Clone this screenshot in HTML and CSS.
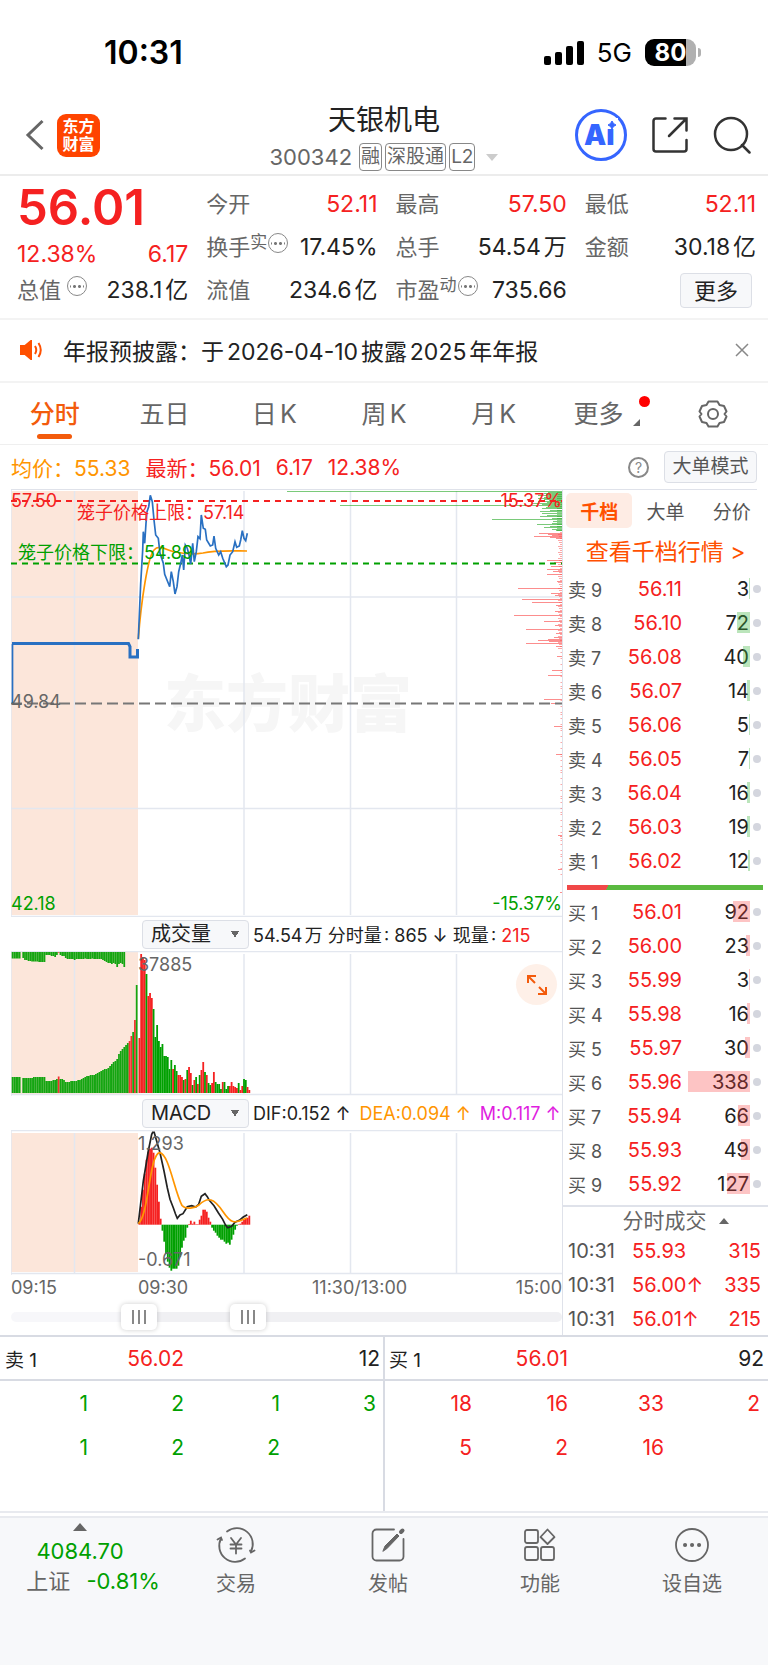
FILE: index.html
```html
<!DOCTYPE html>
<html lang="zh-CN">
<head>
    <meta charset="UTF-8">
    <meta name="viewport" content="width=device-width, initial-scale=1.0">
    <title>天银机电 300342</title>
    <!-- Stylesheet -->
    <link rel="stylesheet" href="styles.css">
</head>
<body>
    <div class="status">
        <span class="clock">10:31</span>
        <div class="status-right">
            <svg width="40" height="24" viewBox="0 0 40 24">
                <rect x="0" y="15" width="7" height="9" rx="2"/>
                <rect x="11" y="11" width="7" height="13" rx="2"/>
                <rect x="22" y="5" width="7" height="19" rx="2"/>
                <rect x="33" y="0" width="7" height="24" rx="2"/>
            </svg>
            <span class="network">5G</span>
            <div class="battery"><span>80</span></div>
        </div>
    </div>

    <header class="header">
        <div class="header-left">
            <a href="#" class="back" aria-label="返回">
                <svg width="20" height="32" viewBox="0 0 20 32" fill="none" stroke="#666" stroke-width="3">
                    <path d="M17.500 2 3 16l14.500 14"/>
                </svg>
            </a>
            <a href="#" class="logo">东方<br>财富</a>
        </div>
        <div class="title">
            <h1>天银机电</h1>
            <div class="subtitle">
                <span class="code">300342</span>
                <span class="badge">融</span>
                <span class="badge">深股通</span>
                <span class="badge">L2</span>
                <svg class="drop" width="12" height="7" viewBox="0 0 12 7" fill="#ccc"><path d="M0 0h12L6 7z"/></svg>
            </div>
        </div>
        <div class="header-right">
            <button aria-label="智能助手">
                <svg width="52" height="52" viewBox="0 0 52 52">
                    <circle cx="26" cy="26" r="24.500" fill="#fff" stroke="#3565ff" stroke-width="3"/>
                    <text x="9" y="36" class="ai">Ai</text>
                    <rect x="30" y="9" width="13" height="11" fill="#fff"/>
                    <path d="M37 12q1 3 4 4-3 1-4 4-1-3-4-4 3-1 4-4z" fill="#3565ff" stroke="#3565ff"/>
                </svg>
            </button>
            <button aria-label="分享">
                <svg width="36" height="36" viewBox="0 0 36 36" fill="none" stroke="#333" stroke-width="2.500" stroke-linecap="round">
                    <path d="M13.500 1.500H4A2.500 2.500 0 0 0 1.500 4v28A2.500 2.500 0 0 0 4 34.500h28a2.500 2.500 0 0 0 2.500-2.500v-9"/>
                    <path d="M22.500 1.500h12v12M34 2 17 19"/>
                </svg>
            </button>
            <button aria-label="搜索">
                <svg width="38" height="38" viewBox="0 0 38 38" fill="none" stroke="#333" stroke-width="2.500" stroke-linecap="round">
                    <circle cx="18" cy="18" r="16"/>
                    <path d="M29 29l7.500 7.500"/>
                </svg>
            </button>
        </div>
    </header>

    <section class="quote">
        <div class="quote-col">
            <div class="price">56.01</div>
            <div class="change"><span>12.38%</span><span>6.17</span></div>
            <div class="item"><span class="name">总值<i class="dots"></i></span><span>238.1亿</span></div>
        </div>
        <div class="quote-col">
            <div class="item"><span class="name">今开</span><span class="red">52.11</span></div>
            <div class="item"><span class="name">换手<sup>实</sup><i class="dots"></i></span><span>17.45%</span></div>
            <div class="item"><span class="name">流值</span><span>234.6亿</span></div>
        </div>
        <div class="quote-col">
            <div class="item"><span class="name">最高</span><span class="red">57.50</span></div>
            <div class="item"><span class="name">总手</span><span>54.54万</span></div>
            <div class="item"><span class="name">市盈<sup>动</sup><i class="dots"></i></span><span>735.66</span></div>
        </div>
        <div class="quote-col">
            <div class="item"><span class="name">最低</span><span class="red">52.11</span></div>
            <div class="item"><span class="name">金额</span><span>30.18亿</span></div>
            <div class="item item-more"><button class="btn">更多</button></div>
        </div>
    </section>

    <section class="notice">
        <svg width="24" height="20" viewBox="0 0 24 20" fill="none" stroke="#ff5000" stroke-width="2">
            <path d="M2 6h4l6-5v18l-6-5H2z" fill="#ff5000"/>
            <path d="M16 6q2.500 4 0 8M19.500 3q4.500 7 0 14"/>
        </svg>
        <p>年报预披露：于2026-04-10披露2025年年报</p>
        <button aria-label="关闭">
            <svg width="14" height="14" viewBox="0 0 14 14" stroke="#888" stroke-width="1.500"><path d="M1 1l12 12M13 1 1 13"/></svg>
        </button>
    </section>

    <nav class="tabs">
        <a href="#" class="active">分时</a>
        <a href="#">五日</a>
        <a href="#">日K</a>
        <a href="#">周K</a>
        <a href="#">月K</a>
        <a href="#" class="tab-more">更多</a>
        <a href="#" aria-label="设置">
            <svg width="30" height="30" viewBox="0 0 30 30" fill="none" stroke="#666" stroke-width="2">
                <path d="M10.500 2.500h9l2 3.500 4.500 1 2.500 5.500-2 2.500 2 2.500-2.500 5.500-4.500 1-2 3.500h-9l-2-3.500-4.500-1L1.500 17.500l2-2.500-2-2.500L4 7l4.500-1z" stroke-linejoin="round"/>
                <circle cx="15" cy="15" r="5"/>
            </svg>
        </a>
    </nav>

    <div class="summary">
        <span class="orange">均价：55.33</span>
        <span class="red">最新：56.01</span>
        <span class="red">6.17</span>
        <span class="red">12.38%</span>
        <button class="help" aria-label="帮助">?</button>
        <button class="btn btn-mode">大单模式</button>
    </div>

    <main class="board">
        <div class="charts">
            <svg class="chart" viewBox="0 0 551 427">
                <rect x="0" y="1" width="127" height="424" class="auction"/>
                <text x="153" y="237" class="watermark">东方财富</text>
                <path class="grid" d="M0 0v427M63.500 1v424M233 1v424M339.500 1v424M445.500 1v424M0 107h551M0 318.500h551M0 426.500h551"/>
                <g id="depth"></g>
                <path class="limit red-line" d="M0 11h551"/>
                <path class="limit green-line" d="M0 73.500h551"/>
                <path class="base" d="M0 213.500h551"/>
                <path class="avg" d="M127.300 149C130 112 137 66 143 60c5-6 12 0 19 1.500 9 2 21 3 30 1.500 12-3 32-2 44-2"/>
                <path class="line" d="M1.500 213V154"/>
                <path class="line thick" d="M1 153.500h116.500l1.500 3V167h7.500v-8"/>
                <path class="line" d="M127.300 149.300L129.700 93.300 131.700 60 132.300 41.700 133.700 53.300 135 33.300 136 21.700 137.700 16.700 139.300 5.300 141.300 11.700 143 30 144.700 45 147.300 48.300 149 63.300 152.300 73.300 153.700 84.300 156.700 91.700 158.700 96.700 160.300 81.700 162.300 91.700 164 104 166 96.700 167.700 81.700 169.700 73.300 171.300 65 172.700 80 174.300 55 176.300 58.300 178 65 179.700 74 181.700 53.300 183.300 71.700 185.300 61.700 187 46.700 189 48.700 190.300 25 192.300 38.300 194.300 39.300 195.700 50 199.300 56 201.700 55 203 46 204.700 58.300 207.700 65 209.700 61.700 211.700 68.300 215.300 76.700 217 75 219 65 221.700 61.700 224 51.700 225.700 57.300 228.300 56 229.700 50 231.300 40.700 233 48.300 234.700 50.700 236.300 43.300"/>
                <text x="0" y="17" class="red">57.50</text>
                <text x="551" y="17" class="red end">15.37%</text>
                <text x="66" y="29" class="red">笼子价格上限：57.14</text>
                <text x="7" y="69" class="green">笼子价格下限：54.89</text>
                <text x="0" y="218" class="gray">49.84</text>
                <text x="0" y="420" class="green">42.18</text>
                <text x="551" y="420" class="green end">-15.37%</text>
            </svg>

            <div class="indicator">
                <select aria-label="副图一"><option>成交量</option></select>
                <span>54.54万 分时量: 865 ↓ 现量: <b class="red">215</b></span>
            </div>
            <div class="volume">
                <svg class="chart" viewBox="0 0 551 145">
                    <rect x="0" y="1" width="127" height="142" class="auction"/>
                    <path class="grid" d="M0 0.500h551M0 0v145M63.500 3v140M233 3v140M339.500 3v140M445.500 3v140M0 143.500h551"/>
                    <g id="volume"></g>
                    <text x="127" y="20" class="gray">37885</text>
                </svg>
                <button class="expand" aria-label="全屏">
                    <svg width="22" height="22" viewBox="0 0 22 22" fill="none" stroke="#f35b0c" stroke-width="2">
                        <path d="M2 9V2h8M2.500 2.500l6.500 6.500M20 13v7h-8M19.500 19.500l-6.500-6.500"/>
                    </svg>
                </button>
            </div>

            <div class="indicator">
                <select aria-label="副图二"><option>MACD</option></select>
                <span>DIF:0.152 ↑</span>
                <span class="orange">DEA:0.094 ↑</span>
                <span class="purple">M:0.117 ↑</span>
            </div>
            <svg class="chart" viewBox="0 0 551 145">
                <rect x="0" y="3" width="127" height="139" class="auction"/>
                <path class="grid" d="M0 0.500h551M0 0v145M63.500 3v140M233 3v140M339.500 3v140M445.500 3v140M0 143.500h551"/>
                <g id="macd"></g>
                <path class="dif" d="M127.300 93.700L132.300 51 137.300 21 140.700 4.300 141.700 2.300 143.200 2.300 144.700 7.700 149 22.700 153 41 156.300 57.700 159 69.300 162.300 77.700 164.500 84 166.300 88.300 169 85 172 83.700 176.300 76.700 180.700 75.700 184.700 77 187.700 74.300 190.300 66.300 194 63.700 196.300 66.700 198.300 70.300 203 75.700 207.300 82.700 211.700 89.300 214.500 95 216.700 97.700 220.700 96.300 224 92.300 228.300 90.300 232.300 87 236.300 84.700"/>
                <path class="avg" d="M127.300 93.700C138 85 138 25 148.500 22.700 158 24 163 60 171 75.500 175 80 184 78 188 75 193 70 196 69 200 70 210 73 214 90 222 91.500 228 93 232 89 236 88"/>
                <text x="127" y="20" class="gray">1.293</text>
                <text x="127" y="136" class="gray">-0.671</text>
            </svg>
            <div class="times">
                <span>09:15</span><span>09:30</span><span>11:30/13:00</span><span>15:00</span>
            </div>
            <div class="range">
                <input type="range" aria-label="开始时间" min="0" max="1000" value="214">
                <input type="range" aria-label="结束时间" min="0" max="1000" value="426">
            </div>
        </div>

        <aside class="book">
            <div class="book-tabs">
                <button class="active">千档</button>
                <button>大单</button>
                <button>分价</button>
            </div>
            <a href="#" class="book-link">查看千档行情 &gt;</a>
            <table class="orders sell">
                <tr><th>卖 9</th><td>56.11</td><td>3<i style="width:1px"></i></td></tr>
                <tr><th>卖 8</th><td>56.10</td><td>72<i style="width:13px"></i></td></tr>
                <tr><th>卖 7</th><td>56.08</td><td>40<i style="width:7px"></i></td></tr>
                <tr><th>卖 6</th><td>56.07</td><td>14<i style="width:3px"></i></td></tr>
                <tr><th>卖 5</th><td>56.06</td><td>5<i style="width:1px"></i></td></tr>
                <tr><th>卖 4</th><td>56.05</td><td>7<i style="width:1px"></i></td></tr>
                <tr><th>卖 3</th><td>56.04</td><td>16<i style="width:3px"></i></td></tr>
                <tr><th>卖 2</th><td>56.03</td><td>19<i style="width:3px"></i></td></tr>
                <tr><th>卖 1</th><td>56.02</td><td>12<i style="width:2px"></i></td></tr>
            </table>
            <div class="ratio"></div>
            <table class="orders buy">
                <tr><th>买 1</th><td>56.01</td><td>92<i style="width:17px"></i></td></tr>
                <tr><th>买 2</th><td>56.00</td><td>23<i style="width:4px"></i></td></tr>
                <tr><th>买 3</th><td>55.99</td><td>3<i style="width:1px"></i></td></tr>
                <tr><th>买 4</th><td>55.98</td><td>16<i style="width:3px"></i></td></tr>
                <tr><th>买 5</th><td>55.97</td><td>30<i style="width:5px"></i></td></tr>
                <tr><th>买 6</th><td>55.96</td><td>338<i style="width:62px"></i></td></tr>
                <tr><th>买 7</th><td>55.94</td><td>66<i style="width:12px"></i></td></tr>
                <tr><th>买 8</th><td>55.93</td><td>49<i style="width:9px"></i></td></tr>
                <tr><th>买 9</th><td>55.92</td><td>127<i style="width:23px"></i></td></tr>
            </table>
            <button class="deals-title">分时成交
                <svg width="10" height="6" viewBox="0 0 10 6" fill="#666"><path d="M0 6h10L5 0z"/></svg>
            </button>
            <table class="deals">
                <tr><th>10:31</th><td>55.93</td><td>315</td></tr>
                <tr><th>10:31</th><td>56.00↑</td><td>335</td></tr>
                <tr><th>10:31</th><td>56.01↑</td><td>215</td></tr>
            </table>
        </aside>
    </main>

    <section class="queues">
        <table class="queue green">
            <thead><tr><th>卖 1</th><td>56.02</td><td></td><td>12</td></tr></thead>
            <tbody>
                <tr><td>1</td><td>2</td><td>1</td><td>3</td></tr>
                <tr><td>1</td><td>2</td><td>2</td><td></td></tr>
            </tbody>
        </table>
        <table class="queue red">
            <thead><tr><th>买 1</th><td>56.01</td><td></td><td>92</td></tr></thead>
            <tbody>
                <tr><td>18</td><td>16</td><td>33</td><td>2</td></tr>
                <tr><td>5</td><td>2</td><td>16</td><td></td></tr>
            </tbody>
        </table>
    </section>

    <footer class="bottom">
        <a href="#" class="index">
            <svg width="14" height="8" viewBox="0 0 14 8" fill="#666"><path d="M0 8h14L7 0z"/></svg>
            <span class="green">4084.70</span>
            <span class="index-row">上证 <em class="green">-0.81%</em></span>
        </a>
        <a href="#" class="action">
            <svg width="40" height="36" viewBox="0 0 40 36" fill="none" stroke="#666" stroke-width="1.800" stroke-linecap="round">
                <path d="M11 4.500A16 16 0 0 1 35 24.500M29 31.500A16 16 0 0 1 5 11.500"/>
                <path d="M1.500 12.500l3.500-2 1 2.500M38.500 23.500l-3.500 2-1-2"/>
                <path d="M15 11l5 6.500 5-6.500M20 17.500v9M14.500 17.500h11M14.500 21.500h11"/>
            </svg>
            交易
        </a>
        <a href="#" class="action">
            <svg width="40" height="36" viewBox="0 0 40 36" fill="none" stroke="#666" stroke-width="1.800" stroke-linecap="round">
                <path d="M26 2.500H8.500a4 4 0 0 0-4 4v23a4 4 0 0 0 4 4h23a4 4 0 0 0 4-4V12"/>
                <path d="M15 24l2-5L29 7l2 2-12 12.500z" fill="#666" stroke-width="1"/>
                <path d="M33 5l1.500-1.500" stroke-width="4"/>
            </svg>
            发帖
        </a>
        <a href="#" class="action">
            <svg width="40" height="36" viewBox="0 0 40 36" fill="none" stroke="#666" stroke-width="1.800">
                <rect x="5" y="3" width="13" height="13" rx="2"/>
                <rect x="5" y="20" width="13" height="13" rx="2"/>
                <rect x="21" y="20" width="13" height="13" rx="2"/>
                <path d="M27.500 2.500l7 7.500-7 7-7-7z" stroke-linejoin="round"/>
            </svg>
            功能
        </a>
        <a href="#" class="action">
            <svg width="40" height="36" viewBox="0 0 40 36" fill="none" stroke="#666" stroke-width="1.800">
                <circle cx="20" cy="18" r="16"/>
                <path d="M13 18h.1M20 18h.1M27 18h.1" stroke-width="4" stroke-linecap="round"/>
            </svg>
            设自选
        </a>
    </footer>

    <!--Script-->
    <script>
        const RED = "#f52121";
const GREEN = "#00a000";
const STEP = 1.773;

function addRect(group, x, y, w, h, color, opacity){
    let rect = document.createElementNS("http://www.w3.org/2000/svg", "rect");
    rect.setAttribute("x", x);
    rect.setAttribute("y", y);
    rect.setAttribute("width", w);
    rect.setAttribute("height", h);
    rect.setAttribute("fill", color);
    rect.setAttribute("opacity", opacity || 1);
    group.appendChild(rect);
}

// volume before the open, bottom and top rows
let volume = document.getElementById("volume");
let auction = [16,16,16,16,16,0,15,15,15,15,15,15,16,16,16,16,16,16,16,12,12,12,12,13,13,14,16.5,14,14,13,11,11,11,12,12,12,12,13,13,14,15,16,17,17,18,18,18,19,20,21,22,23,24,24,25,27,29,31,32,34,39,42,44,46,48,50,52,57,61,73,108];
let auctionRed = [26,66,67,69];
let unmatched = [6.5,6.5,6.5,6.5,6.5,0,6,8,8,9,9,9.5,9.5,9.5,9.5,10,10,10,10,3,3,3,4,4,5,3,0.7,3,4,4,6,7,7,7,7,8,7,7,7,7,7,6.5,7,7,7,6.5,7,7,7,7,7,8,9,10,11,11,12,11,12,15,12,11,12,15];
auction.forEach(function(h, i){
    addRect(volume, i * STEP + 0.7, 142 - h, 1.75, h, auctionRed.includes(i) ? RED : GREEN, 0.92);
});
unmatched.forEach(function(h, i){
    addRect(volume, i * STEP + 0.7, 1, 1.75, h, i == 26 ? RED : GREEN, 0.92);
});

// volume per minute, r = up, g = down
let minutes = [55,139,136,133,119,97,100,95,84,56,68,52,46,49,37,37,36,24,33,24,28,22,18,18,16,13,14,23,26,20,8,13,16,9,18,23,31,21,18,10,8,10,21,11,9,9,4,11,11,4,7,7,11,7,6,5,10,3,7,14,13,6,3];
let colors = "rrrrgrrrggggggggggg" + "rggrrrgrgrrgrgrgrrgrggrrgggg" + "rgggrrrrrgrrggrr";
minutes.forEach(function(h, i){
    addRect(volume, 127.5 + i * STEP, 142 - h, 1.8, h, colors[i] == "g" ? GREEN : RED);
});

let macd = document.getElementById("macd");
let bars = [3,18,35,51,65,73,76,77,72,57,40,23,6,-6,-17,-29,-37,-43,-46,-44,-44,-44,-41,-32,-23,-16,-13,-3,0.7,4,1,3,0.5,0.5,5,9,15,15,13,7,3,-3,-6,-8,-11,-13,-15,-15,-17,-19,-18,-20,-15,-10,-5,-1,0.5,1,3,5,6,7,9];
bars.forEach(function(h, i){
    addRect(macd, 127.5 + i * STEP, h > 0 ? 94.7 - h : 94.7, 1.8, Math.abs(h), h > 0 ? RED : GREEN);
});

// big orders by price, [y, length]
let depth = document.getElementById("depth");
let greens = [[1,275],[15,222],[29,70],[2,14],[3,18],[4,16],[5,24],[6,15],[7,18],[8,24],[9,18],[10,13],[11,24],[12,15],[13,30],[14,20],[16,12],[17,16],[18,20],[20,12],[21,22],[23,20],[25,15],[26,22],[28,10],[31,9],[33,10],[34,25],[36,12],[37,18],[39,10],[40,6]];
let reds = [[43,23],[44,14],[45,10],[46,28],[47,12],[48,6],[70,15],[72,8],[76,11],[79,15],[81,9],[84,15],[91,5],[98,44],[103,11],[105,7],[109,40],[112,30],[115,6],[121,7],[125,48],[131,18],[135,7],[139,36],[143,6],[147,8],[149,14],[150,24],[151,13],[153,36],[156,6],[166,5],[180,10],[185,14],[209,18],[213,11],[236,8],[264,6],[345,4],[346,2],[379,4],[402,2]];
greens.forEach(function(g){
    addRect(depth, 551 - g[1], g[0], g[1], 1, "#22a722", 0.6);
});
reds.forEach(function(r){
    addRect(depth, 551 - r[1], r[0], r[1], 1, "#fa5050", 0.65);
});
for(let y = 2; y < 390; y += 2){
    let len = y < 42 ? 5 : y < 160 ? 2 + y * 7 % 3 : y % 3 == 0 || y % 7 == 0 ? 1.5 : 0;
    addRect(depth, 551 - len, y, len, 1, y < 42 ? "#22a722" : "#fa5050", 0.5);
}
    </script>
</body>
</html>
```
FILE: styles.css
```css
*{
    padding: 0;
    margin: 0;
    box-sizing: border-box;
}
body{
    background-color: #ffffff;
    color: #222222;
    font-family: "Inter","Noto Sans CJK SC",sans-serif;
    font-size: 20px;
    text-autospace: normal;
}
a{
    color: inherit;
    text-decoration: none;
}
button, select{
    font: inherit;
    color: inherit;
    background: none;
    border: none;
    cursor: pointer;
}
svg{
    display: block;
}
i, em{
    font-style: normal;
}
th, td, b{
    font-weight: 400;
}
table{
    width: 100%;
    border-collapse: collapse;
    table-layout: fixed;
}
.red{ color: #f52121; fill: #f52121; }
.green{ color: #00a000; fill: #00a000; }
.orange{ color: #ff9500; }
.purple{ color: #e01ee0; }
.gray{ fill: #666666; }

/* status bar */
.status{
    height: 100px;
    padding: 5px 72px 0 104px;
    display: flex;
    align-items: center;
    justify-content: space-between;
    color: #000000;
}
.clock{
    font-size: 32px;
    font-weight: 600;
}
.status-right{
    display: flex;
    align-items: center;
    gap: 13px;
}
.network{
    font-size: 26px;
}
.battery{
    position: relative;
    width: 51px;
    height: 27px;
    border-radius: 9px;
    background: linear-gradient(90deg, #000000 80%, #b0b0b0 80%);
    color: #ffffff;
    font-size: 24px;
    font-weight: 700;
    line-height: 27px;
    text-align: center;
}
.battery::after{
    content: "";
    position: absolute;
    top: 9px;
    right: -5px;
    width: 3px;
    height: 9px;
    border-radius: 0 3px 3px 0;
    background-color: #b0b0b0;
}

/* header */
.header{
    height: 76px;
    padding: 0 17px 2px;
    display: grid;
    grid-template-columns: 1fr auto 1fr;
    align-items: center;
    border-bottom: 2px solid #ececec;
}
.header-left, .header-right{
    display: flex;
    align-items: center;
    gap: 12px;
    padding-bottom: 2px;
}
.header-left{
    padding-left: 8px;
}
.header-right{
    justify-content: flex-end;
    gap: 25px;
}
.logo{
    width: 43px;
    height: 43px;
    padding-top: 3px;
    border-radius: 9px;
    background-color: #ff4400;
    color: #ffffff;
    font-size: 16px;
    font-weight: 700;
    line-height: 18px;
    text-align: center;
}
.title{
    text-align: center;
}
.title h1{
    font-size: 28px;
    font-weight: 400;
    line-height: 40px;
}
.subtitle{
    display: flex;
    align-items: center;
    gap: 3px;
    height: 32px;
    padding-top: 2px;
    color: #666666;
}
.code{
    margin-right: 4px;
    font-size: 22px;
}
.badge{
    height: 28px;
    padding: 0 1px;
    border: 1px solid #888888;
    border-radius: 4px;
    font-size: 19px;
    line-height: 26px;
}
.drop{
    margin-left: 8px;
}
.ai{
    font-size: 28px;
    font-weight: 900;
    fill: #3565ff;
}

/* quote numbers */
.quote{
    display: grid;
    grid-template-columns: repeat(4, 1fr);
    gap: 18px;
    height: 144px;
    padding: 7px 12px 0 17px;
    border-bottom: 2px solid #f3f3f3;
    font-size: 23px;
}
.price{
    color: #f52121;
    font-size: 49px;
    font-weight: 600;
    line-height: 50px;
}
.change, .item{
    display: flex;
    justify-content: space-between;
    line-height: 43px;
    height: 43px;
    white-space: nowrap;
}
.change{
    height: 36px;
    color: #f52121;
}
.name{
    display: flex;
    color: #666666;
    font-size: 22px;
}
.name sup{
    font-size: 17px;
    line-height: 32px;
}
.dots{
    width: 20px;
    height: 20px;
    margin: 7px 0 0 1px;
    border: 1px solid #888888;
    border-radius: 50%;
    background: radial-gradient(circle, #777777 1px, transparent 2px) 2px 7px / 5px 5px repeat-x content-box;
    padding: 0 2px;
}
.name .dots:nth-child(1){
    margin-left: 6px;
}
.item-more{
    justify-content: flex-end;
    align-items: center;
    padding-right: 4px;
}
.btn{
    border: 1px solid #dcdfe6;
    border-radius: 4px;
    background-color: #f7f8fa;
}
.item-more .btn{
    width: 72px;
    height: 35px;
    font-size: 22px;
    line-height: 32px;
}

/* notice */
.notice{
    display: flex;
    align-items: center;
    gap: 20px;
    height: 63px;
    padding: 0 19px 2px;
    border-bottom: 2px solid #f3f3f3;
    font-size: 23px;
}
.notice p{
    flex: 1;
}

/* period tabs */
.tabs{
    display: grid;
    grid-template-columns: repeat(7, 1fr);
    height: 62px;
    border-bottom: 1px solid #efefef;
    color: #666666;
    font-size: 25px;
    line-height: 60px;
}
.tabs a{
    position: relative;
    display: flex;
    justify-content: center;
    align-items: center;
}
.tabs .active{
    color: #f35b0c;
    font-weight: 500;
}
.tabs .active::after{
    content: "";
    position: absolute;
    bottom: 5px;
    width: 35px;
    height: 5px;
    border-radius: 3px;
    background-color: #f35b0c;
}
.tabs .tab-more{
    padding-right: 10px;
}
.tab-more::before{
    content: "";
    position: absolute;
    top: 13px;
    right: 8px;
    width: 11px;
    height: 11px;
    border-radius: 50%;
    background-color: #ff0000;
}
.tab-more::after{
    content: "";
    position: absolute;
    bottom: 18px;
    right: 18px;
    border-left: 7px solid transparent;
    border-bottom: 7px solid #666666;
}

/* summary line */
.summary{
    display: flex;
    align-items: center;
    gap: 15px;
    height: 45px;
    margin: 0 11px;
    border-bottom: 1px solid #dfe2ea;
    font-size: 21px;
}
.help{
    width: 21px;
    height: 21px;
    margin-left: auto;
    border: 2px solid #888888;
    border-radius: 50%;
    color: #888888;
    font-size: 14px;
    line-height: 17px;
}
.btn-mode{
    width: 93px;
    height: 32px;
    color: #555555;
    font-size: 19px;
    line-height: 30px;
}

/* charts */
.board{
    display: grid;
    grid-template-columns: minmax(0, 1fr) 206px;
    padding-left: 11px;
    border-bottom: 2px solid #d8dbe3;
}
.chart{
    width: 100%;
    height: auto;
    font-size: 18px;
}
.chart path{
    fill: none;
}
.auction{ fill: #fce6da; }
.chart .grid{
    stroke: #e3e7ef;
    stroke-width: 1.5;
}
.watermark{
    fill: #f6f6f6;
    font-size: 62px;
    font-weight: 900;
}
.end{ text-anchor: end; }
.limit{
    stroke-width: 2;
    stroke-dasharray: 6 5;
}
.red-line{ stroke: #f52121; }
.green-line{ stroke: #00a000; }
.base{
    stroke: #777777;
    stroke-width: 2;
    stroke-dasharray: 11 5;
}
.line{
    stroke: #2970c2;
    stroke-width: 1.7;
}
.thick{
    stroke-width: 3;
}
.avg{
    stroke: #ff9500;
    stroke-width: 1.7;
}
.dif{
    stroke: #222222;
    stroke-width: 1.7;
}
.indicator{
    display: flex;
    align-items: center;
    gap: 4px;
    height: 34px;
    padding-left: 131px;
    font-size: 18px;
    white-space: nowrap;
}
.indicator .orange, .indicator .purple{
    margin-left: 5px;
}
.indicator select{
    appearance: none;
    width: 107px;
    height: 29px;
    padding-left: 8px;
    border: 1px solid #dcdfe6;
    border-radius: 4px;
    background: #f7f8fa conic-gradient(from -30deg at 50% 100%, #666666 60deg, transparent 60deg) 88px 10px / 8px 7px no-repeat;
    font-size: 20px;
    line-height: 27px;
}
.volume{
    position: relative;
}
.expand{
    position: absolute;
    top: 13px;
    right: 5px;
    width: 41px;
    height: 41px;
    border-radius: 50%;
    background-color: #fef0e8;
    display: grid;
    place-items: center;
}
.times{
    display: grid;
    grid-template-columns: 127px 174px 1fr auto;
    height: 26px;
    color: #666666;
    font-size: 18px;
    line-height: 26px;
}
.range{
    position: relative;
    height: 34px;
}
.range::before{
    content: "";
    position: absolute;
    top: 11px;
    width: 100%;
    height: 10px;
    border-radius: 5px;
    background: linear-gradient(90deg, #f7f7fa 23%, #f0f0f3 23%);
}
.range input{
    appearance: none;
    position: absolute;
    top: 3px;
    width: 100%;
    height: 26px;
    background: none;
    pointer-events: none;
}
.range input::-webkit-slider-thumb{
    appearance: none;
    width: 36px;
    height: 26px;
    border-radius: 5px;
    background: repeating-linear-gradient(90deg, #888888 0 2px, transparent 2px 6px) 11px 6px / 14px 14px no-repeat, #ffffff;
    box-shadow: 0 0 5px rgba(0,0,0,0.2);
    pointer-events: auto;
}

/* order book */
.book{
    border-left: 1px solid #dfe2ea;
}
.book-tabs{
    display: grid;
    grid-template-columns: repeat(3, 1fr);
    height: 42px;
    padding: 3px 3px 4px;
    color: #555555;
    font-size: 19px;
}
.book-tabs .active{
    border-radius: 5px;
    background-color: #feece4;
    color: #ff5000;
    font-weight: 700;
}
.book-link{
    display: block;
    height: 40px;
    color: #ff5000;
    font-size: 23px;
    line-height: 40px;
    text-align: center;
}
.orders tr, .deals tr{
    height: 34px;
}
.orders th{
    width: 54px;
    padding-left: 5px;
    color: #555555;
    font-size: 18px;
    text-align: left;
}
.orders td{
    width: 65px;
    color: #f52121;
    text-align: right;
}
.orders td:last-child{
    position: relative;
    width: auto;
    padding-right: 19px;
    color: #222222;
}
.orders td:last-child::after{
    content: "";
    position: absolute;
    top: 13px;
    right: 7px;
    width: 8px;
    height: 8px;
    border-radius: 50%;
    background-color: #d4d6de;
}
.orders i{
    position: absolute;
    top: 6px;
    right: 18px;
    height: 21px;
    background-color: rgba(60,180,60,0.35);
}
.buy i{
    background-color: rgba(250,60,60,0.3);
}
.ratio{
    height: 5px;
    margin: 7px 5px 5px 4px;
    background: linear-gradient(120deg, #f04848 21%, #5aba40 21%);
}
.deals-title{
    display: flex;
    align-items: center;
    justify-content: center;
    gap: 12px;
    width: 100%;
    height: 29px;
    margin-top: 4px;
    padding-left: 20px;
    border-top: 2px solid #dfe2ea;
    color: #666666;
    font-size: 21px;
    line-height: 27px;
}
.deals{
    margin-bottom: -1px;
}
.deals th{
    width: 58px;
    padding-left: 5px;
    color: #555555;
    text-align: left;
}
.deals td{
    padding-left: 11px;
    color: #f52121;
}
.deals td:last-child{
    width: 60px;
    padding-right: 7px;
    text-align: right;
}

/* queues */
.queues{
    display: grid;
    grid-template-columns: 1fr 1fr;
    align-items: start;
    height: 176px;
    border-bottom: 2px solid #e8eaef;
    background: linear-gradient(#d8dbe3, #d8dbe3) center / 2px 100% no-repeat;
}
.queue{
    font-size: 21px;
    text-align: right;
}
.queue td{
    padding-right: 8px;
}
.queue thead tr{
    height: 43px;
    border-bottom: 2px solid #d8dbe3;
}
.queue th{
    padding-left: 5px;
    color: #222222;
    font-size: 19px;
    text-align: left;
}
.queue thead td{
    color: #f52121;
}
.queue thead td:last-child{
    padding-right: 4px;
    color: #222222;
}
.queue tbody tr{
    height: 45px;
}

/* bottom bar */
.bottom{
    display: grid;
    grid-template-columns: 160px repeat(4, 1fr);
    height: 149px;
    margin-top: 3px;
    border-top: 2px solid #e8eaef;
    background-color: #f7f8fa;
    color: #666666;
}
.index, .action{
    display: flex;
    flex-direction: column;
    align-items: center;
    line-height: 30px;
}
.index{
    padding-top: 5px;
    font-size: 22px;
}
.index .green{
    margin-top: 5px;
}
.index-row{
    padding-left: 26px;
    white-space: nowrap;
}
.index-row em{
    margin-left: 10px;
}
.action{
    gap: 6px;
    padding-top: 9px;
}
```
